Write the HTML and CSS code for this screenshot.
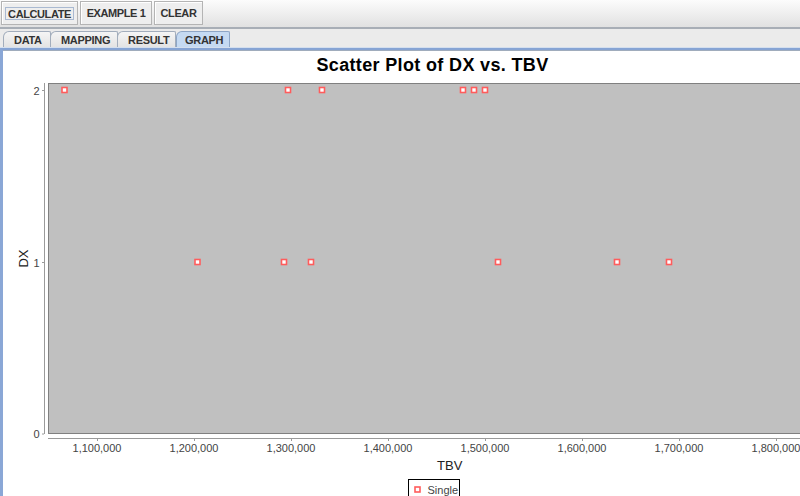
FILE: index.html
```html
<!DOCTYPE html>
<html>
<head>
<meta charset="utf-8">
<link rel="stylesheet" href="styles.css">
</head>
<body>
<div class="app">
  <div class="toolbar">
    <button class="btn btn-calc"><span class="focus">CALCULATE</span></button>
    <button class="btn btn-ex">EXAMPLE 1</button>
    <button class="btn btn-clear">CLEAR</button>
  </div>
  <div class="tabbar">
    <div class="tab tab-data">DATA</div>
    <div class="tab tab-map">MAPPING</div>
    <div class="tab tab-res">RESULT</div>
    <div class="tab tab-graph selected">GRAPH</div>
  </div>
  <div class="panel">
    <div class="panel-inner">
      <svg class="chart" width="860" height="445" viewBox="3 51 860 445" xmlns="http://www.w3.org/2000/svg">
        <text class="title" x="432.5" y="71" text-anchor="middle">Scatter Plot of DX vs. TBV</text>

        <rect class="plot" x="48.5" y="83.5" width="803" height="350"/>

        <line class="axis" x1="44.5" y1="83" x2="44.5" y2="434"/>
        <line class="axis" x1="42" y1="90.5" x2="44" y2="90.5"/>
        <line class="axis" x1="42" y1="262.5" x2="44" y2="262.5"/>
        <line class="axis" x1="42" y1="434" x2="44" y2="434"/>
        <text class="tick" x="39.5" y="94.5" text-anchor="end">2</text>
        <text class="tick" x="39.5" y="266.5" text-anchor="end">1</text>
        <text class="tick" x="39.5" y="438" text-anchor="end">0</text>
        <text class="axislabel" transform="translate(27.5 258.5) rotate(-90)" text-anchor="middle">DX</text>

        <line class="axis" x1="48" y1="438.5" x2="852" y2="438.5"/>
        <line class="axis" x1="97.5" y1="439" x2="97.5" y2="441"/>
        <line class="axis" x1="194.5" y1="439" x2="194.5" y2="441"/>
        <line class="axis" x1="291.5" y1="439" x2="291.5" y2="441"/>
        <line class="axis" x1="388.5" y1="439" x2="388.5" y2="441"/>
        <line class="axis" x1="485.5" y1="439" x2="485.5" y2="441"/>
        <line class="axis" x1="582.5" y1="439" x2="582.5" y2="441"/>
        <line class="axis" x1="679.5" y1="439" x2="679.5" y2="441"/>
        <line class="axis" x1="776.5" y1="439" x2="776.5" y2="441"/>
        <text class="tick" x="97" y="452" text-anchor="middle">1,100,000</text>
        <text class="tick" x="194" y="452" text-anchor="middle">1,200,000</text>
        <text class="tick" x="291" y="452" text-anchor="middle">1,300,000</text>
        <text class="tick" x="388" y="452" text-anchor="middle">1,400,000</text>
        <text class="tick" x="485" y="452" text-anchor="middle">1,500,000</text>
        <text class="tick" x="582" y="452" text-anchor="middle">1,600,000</text>
        <text class="tick" x="679" y="452" text-anchor="middle">1,700,000</text>
        <text class="tick" x="776" y="452" text-anchor="middle">1,800,000</text>
        <text class="axislabel" x="449.7" y="470" text-anchor="middle">TBV</text>

        <g class="pts">
          <rect x="62" y="87.5" width="5" height="5"/>
          <rect x="285.5" y="87.5" width="5" height="5"/>
          <rect x="319.5" y="87.5" width="5" height="5"/>
          <rect x="460.5" y="87.5" width="5" height="5"/>
          <rect x="471.5" y="87.5" width="5" height="5"/>
          <rect x="482.5" y="87.5" width="5" height="5"/>
          <rect x="195" y="259.5" width="5" height="5"/>
          <rect x="281.5" y="259.5" width="5" height="5"/>
          <rect x="308.5" y="259.5" width="5" height="5"/>
          <rect x="495.5" y="259.5" width="5" height="5"/>
          <rect x="614.5" y="259.5" width="5" height="5"/>
          <rect x="666.5" y="259.5" width="5" height="5"/>
        </g>

        <rect class="legend" x="408.5" y="479.5" width="51" height="22"/>
        <rect class="pts-l" x="415" y="487" width="5" height="5"/>
        <text class="legendtext" x="427.5" y="493.5">Single</text>
      </svg>
    </div>
  </div>
</div>
</body>
</html>
```
FILE: styles.css
```css
html, body {
  margin: 0;
  padding: 0;
  width: 800px;
  height: 496px;
  overflow: hidden;
  background: #ececec;
  font-family: "Liberation Sans", Arial, sans-serif;
}

.app {
  display: flex;
  flex-direction: column;
  width: 800px;
  height: 496px;
}

.toolbar {
  flex: none;
  height: 26px;
  display: flex;
  align-items: flex-start;
  gap: 2px;
  padding: 1px 0 0 1px;
  box-sizing: content-box;
  background: linear-gradient(#fcfcfc, #e1e1e1);
  border-bottom: 2px solid #a8aeb6;
}

.btn {
  height: 24px;
  box-sizing: border-box;
  border: 1px solid #b4b4b4;
  box-shadow: inset 1px 1px 0 #ffffff;
  background: #eeeeee;
  color: #333333;
  font-family: "Liberation Sans", Arial, sans-serif;
  font-weight: bold;
  font-size: 11px;
  letter-spacing: -0.4px;
  padding: 0;
  margin: 0;
  display: flex;
  align-items: center;
  justify-content: center;
}

.btn-calc { width: 77px; }
.btn-ex { width: 72px; }
.btn-clear { width: 49px; }

.focus {
  border: 1px solid #a9b9d1;
  padding: 1px 2px 0 2px;
  line-height: 10px;
}

.tabbar {
  flex: none;
  height: 18px;
  display: flex;
  align-items: flex-end;
  padding-left: 3px;
  background: #ebebeb;
  border-bottom: 1px solid #d4dfee;
}

.tab {
  height: 16px;
  box-sizing: border-box;
  border: 1px solid #a2adbc;
  border-bottom: none;
  border-radius: 6px 2px 0 0;
  margin-right: -1px;
  background: linear-gradient(#f5f5f5, #e3e3e3);
  color: #333333;
  font-weight: bold;
  font-size: 11px;
  letter-spacing: -0.3px;
  display: flex;
  align-items: center;
  padding: 1px 0 0 10px;
}

.tab-data { width: 48px; }
.tab-map { width: 68px; }
.tab-res { width: 59px; margin-right: 0; }
.tab-graph { width: 54px; padding-left: 8px; }

.tab.selected {
  background: #c5daf2;
  border-color: #8ea6c6;
}

.panel {
  flex: 1;
  min-height: 0;
  border-top: 2px solid #86a4d4;
  border-left: 3px solid #8aa7d6;
  background: #ffffff;
  overflow: hidden;
}

.panel-inner {
  border-top: 1px solid #a0acbc;
  height: 100%;
}

.chart {
  display: block;
}

.title {
  font-family: "Liberation Sans", Arial, sans-serif;
  font-weight: bold;
  font-size: 18px;
  letter-spacing: 0.35px;
  fill: #000000;
}

.plot {
  fill: #c0c0c0;
  stroke: #808080;
  stroke-width: 1;
}

.axis {
  stroke: #9a9a9a;
  stroke-width: 1;
}

.tick {
  font-family: "Liberation Sans", Arial, sans-serif;
  font-size: 11px;
  fill: #444444;
}

.axislabel {
  font-family: "Liberation Sans", Arial, sans-serif;
  font-size: 13px;
  fill: #222222;
}

.pts rect, .pts-l {
  fill: #ffffff;
  stroke: #ff5c5c;
  stroke-width: 1.6;
}

.legend {
  fill: #ffffff;
  stroke: #000000;
  stroke-width: 1;
}

.legendtext {
  font-family: "Liberation Sans", Arial, sans-serif;
  font-size: 11px;
  fill: #444444;
}
```
